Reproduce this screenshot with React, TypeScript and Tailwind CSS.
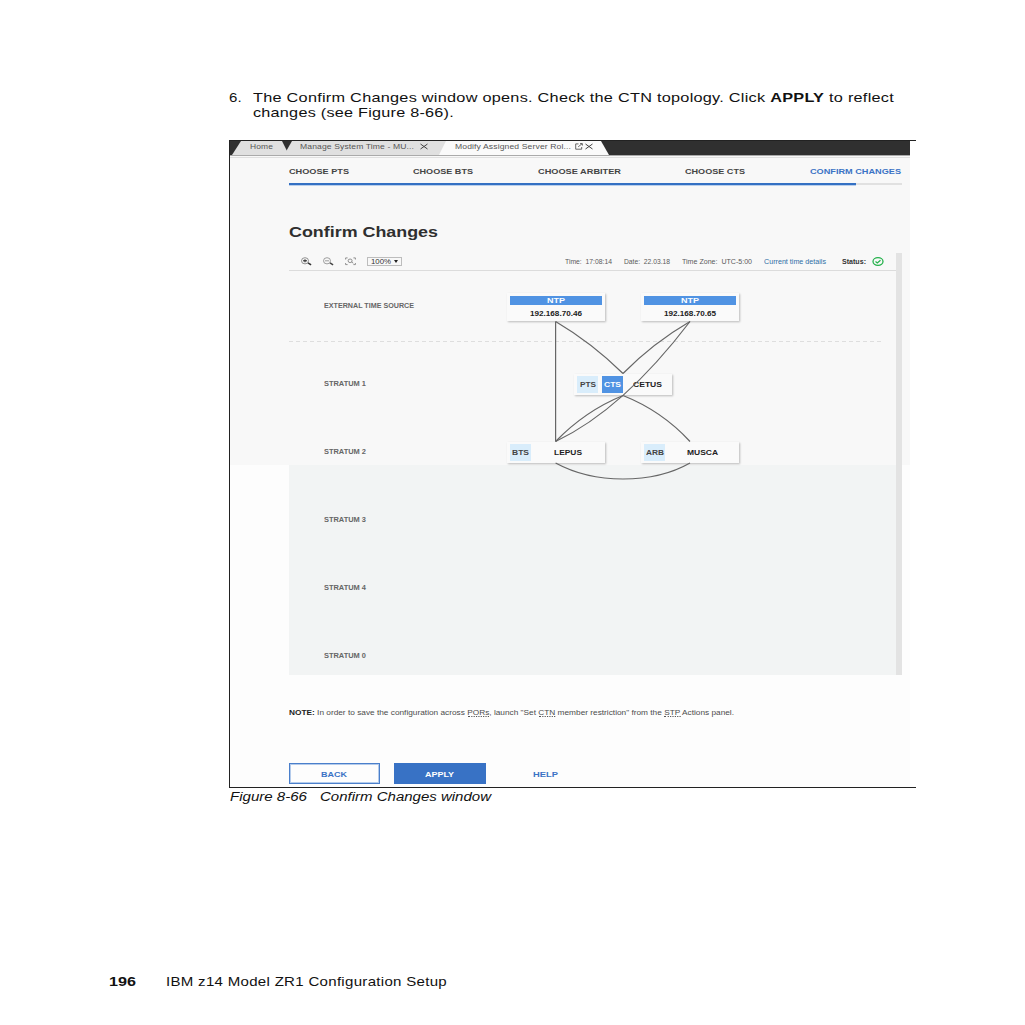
import React, { useLayoutEffect, useRef, useState } from "react";

/* Extended-width text: stretches its content horizontally to fill the box. */
function Wide({ className = "", children }: { className?: string; children: React.ReactNode }) {
  const outer = useRef<HTMLSpanElement>(null);
  const inner = useRef<HTMLSpanElement>(null);
  const [ratio, setRatio] = useState(1);
  useLayoutEffect(() => {
    if (outer.current && inner.current) {
      const natural = inner.current.getBoundingClientRect().width / ratio;
      setRatio(outer.current.clientWidth / natural);
    }
  }, []);
  return (
    <span ref={outer} className={`block shrink-0 whitespace-nowrap ${className}`}>
      <span ref={inner} className="block w-max origin-left" style={{ transform: `scaleX(${ratio})` }}>
        {children}
      </span>
    </span>
  );
}

function Close() {
  return (
    <svg className="h-[7px] w-[8px] shrink-0" viewBox="0 0 8 7" fill="none" stroke="#444" strokeWidth="1">
      <path d="M.5 1 7.5 6M7.5 1 .5 6" />
    </svg>
  );
}

function Tabs() {
  return (
    <div className="flex h-[14px] bg-[#303030] text-[7.3px] leading-[12px] tracking-[0.1px] text-[#555]">
      <div className="ml-[2px] h-[14px] w-[57px] bg-[#e0e0e0] pl-[18px] [clip-path:polygon(9px_0,50px_0,57px_100%,0_100%)]">
        <Wide className="w-[23px]">Home</Wide>
      </div>
      <div className="-ml-[5px] flex h-[14px] w-[163px] bg-[#e0e0e0] pl-[16px] [clip-path:polygon(8px_0,100%_0,100%_100%,0_100%)]">
        <Wide className="w-[114px]">Manage System Time - MU...</Wide>
        <span className="ml-[6px] pt-[2px]"><Close /></span>
      </div>
      <div className="-ml-[8px] flex h-[14px] w-[170px] bg-[#fafafa] pl-[16px] [clip-path:polygon(7px_0,162px_0,100%_100%,0_100%)]">
        <Wide className="w-[116px]">Modify Assigned Server Rol...</Wide>
        <span className="ml-[4px] flex gap-[2px] pt-[2px]">
          <svg className="h-[7px] w-[8px]" viewBox="0 0 8 7" fill="none" stroke="#444" strokeWidth=".8">
            <path d="M3.5 .9H.7v5.3h6V4M3.2 3.8 7 .8M5 .6h2.4v2" />
          </svg>
          <Close />
        </span>
      </div>
    </div>
  );
}

function Steps() {
  return (
    <div className="ml-[59px] w-[613px]">
      <div className="flex w-[612px] text-[7.3px] leading-[11px] font-bold text-[#444]">
        <Wide className="w-[60px]">CHOOSE PTS</Wide>
        <Wide className="ml-[64px] w-[60px]">CHOOSE BTS</Wide>
        <Wide className="ml-[65px] w-[83px]">CHOOSE ARBITER</Wide>
        <Wide className="ml-[64px] w-[60px]">CHOOSE CTS</Wide>
        <Wide className="ml-[65px] w-[91px] text-[#3b73c5]">CONFIRM CHANGES</Wide>
      </div>
      <div className="mt-[6px] h-[2px] bg-[#e1e1e1]">
        <div className="h-[2px] w-[567px] bg-[#3470c3] shadow-[0_1px_0_#b9cfec]" />
      </div>
    </div>
  );
}

function Toolbar() {
  return (
    <div className="flex h-[18px] w-[607px] items-center border-b border-[#dcdcdc] text-[7px] leading-[10px] text-[#5a5a5a]">
      <svg className="ml-[12px] h-[9px] w-[11px]" viewBox="0 0 11 9" fill="none" stroke="#777" strokeWidth=".8">
        <ellipse cx="4" cy="3.8" rx="3.5" ry="3.1" />
        <path d="M2 3.8h4M4 2.3v3" stroke="#222" strokeWidth="1" />
        <path d="m7 5.8 3.1 2.1" stroke="#333" strokeWidth="1.5" />
      </svg>
      <svg className="ml-[11px] h-[9px] w-[11px]" viewBox="0 0 11 9" fill="none" stroke="#888" strokeWidth=".8">
        <ellipse cx="4" cy="3.8" rx="3.5" ry="3.1" />
        <path d="M2 3.8h4" />
        <path d="m7 5.8 3.1 2.1" stroke="#444" strokeWidth="1.4" />
      </svg>
      <svg className="ml-[11px] h-[9px] w-[11px]" viewBox="0 0 11 9" fill="none" stroke="#777" strokeWidth=".8">
        <path d="M.6 2.5V.9h2M8.4.9h2v1.6M.6 6v1.6h2M8.4 7.6h2V6M6.6 5l1.7 1.2" />
        <ellipse cx="5.1" cy="3.8" rx="2" ry="1.8" />
      </svg>
      <div className="ml-[11px] flex h-[9px] w-[35px] items-center border border-[#bdbdbd] pl-[3px] text-[#333]">
        <Wide className="w-[20px]">100%</Wide>
        <svg className="ml-[3px] h-[3px] w-[4px]" viewBox="0 0 4 3"><path d="M0 0h4L2 3z" fill="#222" /></svg>
      </div>
      <Wide className="ml-[163px] w-[47px]">Time:&nbsp; 17:08:14</Wide>
      <Wide className="ml-[12px] w-[46px]">Date:&nbsp; 22.03.18</Wide>
      <Wide className="ml-[12px] w-[70px]">Time Zone:&nbsp; UTC-5:00</Wide>
      <Wide className="ml-[12px] w-[62px] text-[#2e6ea6]">Current time details</Wide>
      <Wide className="ml-[16px] w-[24px] font-bold text-[#333]">Status:</Wide>
      <svg className="ml-[6px] h-[9px] w-[12px] shrink-0" viewBox="0 0 12 9" fill="none" stroke="#24b14b" strokeWidth="1.3">
        <ellipse cx="6" cy="4.5" rx="5" ry="3.8" />
        <path d="m3.5 4.5 1.8 1.4 3.2-2.6" />
      </svg>
    </div>
  );
}

const card = "absolute bg-[#fafafa] shadow-[1px_1px_2px_rgba(0,0,0,0.25)] text-[7px] font-bold text-[#222]";

function Ntp({ place, ip }: { place: string; ip: string }) {
  return (
    <div className={`${card} h-[28px] w-[98px] px-[3px] pt-[3px] ${place}`}>
      <div className="flex h-[9px] justify-center bg-[#5093e3] leading-[9.6px] text-white">
        <Wide className="w-[18px]">NTP</Wide>
      </div>
      <div className="flex h-[15px] justify-center leading-[17px]">
        <Wide className="w-[52px]">{ip}</Wide>
      </div>
    </div>
  );
}

function Topology() {
  return (
    <div className="relative h-[404px] w-[607px]">
      <div className="flex flex-col pl-[35px] text-[6.6px] leading-[10px] font-bold text-[#666]">
        <Wide className="mt-[30px] w-[90px] text-[6.4px]">EXTERNAL TIME SOURCE</Wide>
        <Wide className="mt-[67.5px] w-[42px]">STRATUM 1</Wide>
        <Wide className="mt-[58px] w-[42px]">STRATUM 2</Wide>
        <Wide className="mt-[58px] w-[42px]">STRATUM 3</Wide>
        <Wide className="mt-[58px] w-[42px]">STRATUM 4</Wide>
        <Wide className="mt-[58.5px] w-[42px]">STRATUM 0</Wide>
      </div>
      <div className="absolute top-[70px] left-0 h-px w-[595px] bg-[repeating-linear-gradient(90deg,#dedede_0_4px,transparent_4px_7px)]" />
      <Ntp place="left-[217.5px] top-[22px]" ip="192.168.70.46" />
      <Ntp place="left-[351.5px] top-[22px]" ip="192.168.70.65" />
      <div className={`${card} top-[103px] left-[285px] flex h-[21px] w-[98px] items-center pl-[3px] leading-[17px]`}>
        <span className="flex h-[17px] w-[21px] justify-center bg-[#d9edfb] text-[#444]"><Wide className="w-[16px]">PTS</Wide></span>
        <span className="ml-[4px] flex h-[17px] w-[21px] justify-center bg-[#5093e3] text-white"><Wide className="w-[17px]">CTS</Wide></span>
        <Wide className="ml-[10px] w-[29px]">CETUS</Wide>
      </div>
      <div className={`${card} top-[171px] left-[218px] flex h-[21px] w-[98px] items-center pl-[3px] leading-[17px]`}>
        <span className="flex h-[17px] w-[21px] justify-center bg-[#d9edfb] text-[#444]"><Wide className="w-[17px]">BTS</Wide></span>
        <Wide className="ml-[23px] w-[28px]">LEPUS</Wide>
      </div>
      <div className={`${card} top-[171px] left-[352px] flex h-[21px] w-[98px] items-center pl-[3px] leading-[17px]`}>
        <span className="flex h-[17px] w-[21px] justify-center bg-[#d9edfb] text-[#444]"><Wide className="w-[18px]">ARB</Wide></span>
        <Wide className="ml-[22px] w-[31px]">MUSCA</Wide>
      </div>
      <svg className="absolute top-0 left-0 h-[404px] w-[607px]" viewBox="289 271 607 404" fill="none" stroke="#666" strokeWidth="1.2">
        <path d="M555.6 321.5V441.5" />
        <path d="M555.6 321.5Q592 343 623 373.5" />
        <path d="M690 321.5Q653 343 623 373.5" />
        <path d="M690 321.5Q623 409.5 555.6 441.5" />
        <path d="M623 395.5Q585 411 555.6 441.5" />
        <path d="M623 395.5Q662 411 690 441.5" />
        <path d="M555.6 463Q585 479 623 479Q662 479 690 463" />
      </svg>
    </div>
  );
}

const term = "border-b border-dotted border-[#555]";

export default function App() {
  return (
    <main className="h-[1025px] w-[1025px] overflow-hidden bg-white pt-[90px] font-['Liberation_Sans',Arial,sans-serif] text-[#111]">
      <div className="ml-[229px] flex text-[12.8px] leading-[15px] tracking-[0.2px]">
        <Wide className="w-[13px]">6.</Wide>
        <div className="ml-[11px]">
          <div className="flex">
            <Wide className="w-[641px]">The Confirm Changes window opens. Check the CTN topology. Click <b>APPLY</b> to reflect</Wide>
          </div>
          <Wide className="w-[201px]">changes (see Figure 8-66).</Wide>
        </div>
      </div>

      <figure className="mt-[20px] ml-[229px] w-[687px]">
        <div className="h-[648px] border-y border-l border-[#222]">
          <div className="flex h-full w-[680px] flex-col bg-[linear-gradient(#f8f8f8_324px,#fdfdfd_324px)]">
            <Tabs />
            <div className="h-[3px] shrink-0 border-t border-b border-t-[#aaa] border-b-[#e0e0e0] bg-[#f8f8f8]" />
            <div className="h-[8px] shrink-0" />
            <Steps />
            <h1 className="mt-[38px] ml-[59px] text-[14.4px] leading-[18px] font-bold text-[#2f2f2f]">
              <Wide className="w-[149px]">Confirm Changes</Wide>
            </h1>
            <div className="mt-[12px] ml-[59px] flex h-[422px] w-[613px] shrink-0 bg-[linear-gradient(#f8f8f8_212px,#f2f4f4_212px)]">
              <div>
                <Toolbar />
                <Topology />
              </div>
              <div className="w-[6px] bg-[#e3e3e3]" />
            </div>
            <div className="mt-[33px] ml-[59px] text-[7px] leading-[10px] text-[#4c4c4c]">
              <Wide className="w-[445px]">
                <b className="text-[#222]">NOTE:</b> In order to save the configuration across <span className={term}>PORs</span>, launch "Set <span className={term}>CTN</span> member restriction" from the <span className={term}>STP</span> Actions panel.
              </Wide>
            </div>
            <div className="mt-[45px] ml-[59px] flex h-[21px] text-[7.5px] leading-[23px] font-bold">
              <button className="flex h-[21px] w-[91px] justify-center border border-solid border-[#4a7fcb] pr-[1px] leading-[21px] text-[#3b73c5] shadow-[inset_0_0_0_1px_#b4cbeb]">
                <Wide className="w-[26px]">BACK</Wide>
              </button>
              <button className="ml-[14px] flex h-[21px] w-[92px] justify-center bg-[#3872c5] pr-[1px] text-white">
                <Wide className="w-[29px]">APPLY</Wide>
              </button>
              <button className="ml-[47px] flex h-[21px] text-[#3b73c5]">
                <Wide className="w-[25px]">HELP</Wide>
              </button>
            </div>
          </div>
        </div>
        <figcaption className="mt-[1px] flex pl-[1px] text-[12px] leading-[16px] italic">
          <Wide className="w-[77px]">Figure 8-66</Wide>
          <Wide className="ml-[13px] w-[171px]">Confirm Changes window</Wide>
        </figcaption>
      </figure>

      <footer className="mt-[169px] ml-[109px] flex text-[12.4px] leading-[16px]">
        <Wide className="w-[27px] font-bold">196</Wide>
        <Wide className="ml-[30px] w-[281px] tracking-[0.25px]">IBM z14 Model ZR1 Configuration Setup</Wide>
      </footer>
    </main>
  );
}
